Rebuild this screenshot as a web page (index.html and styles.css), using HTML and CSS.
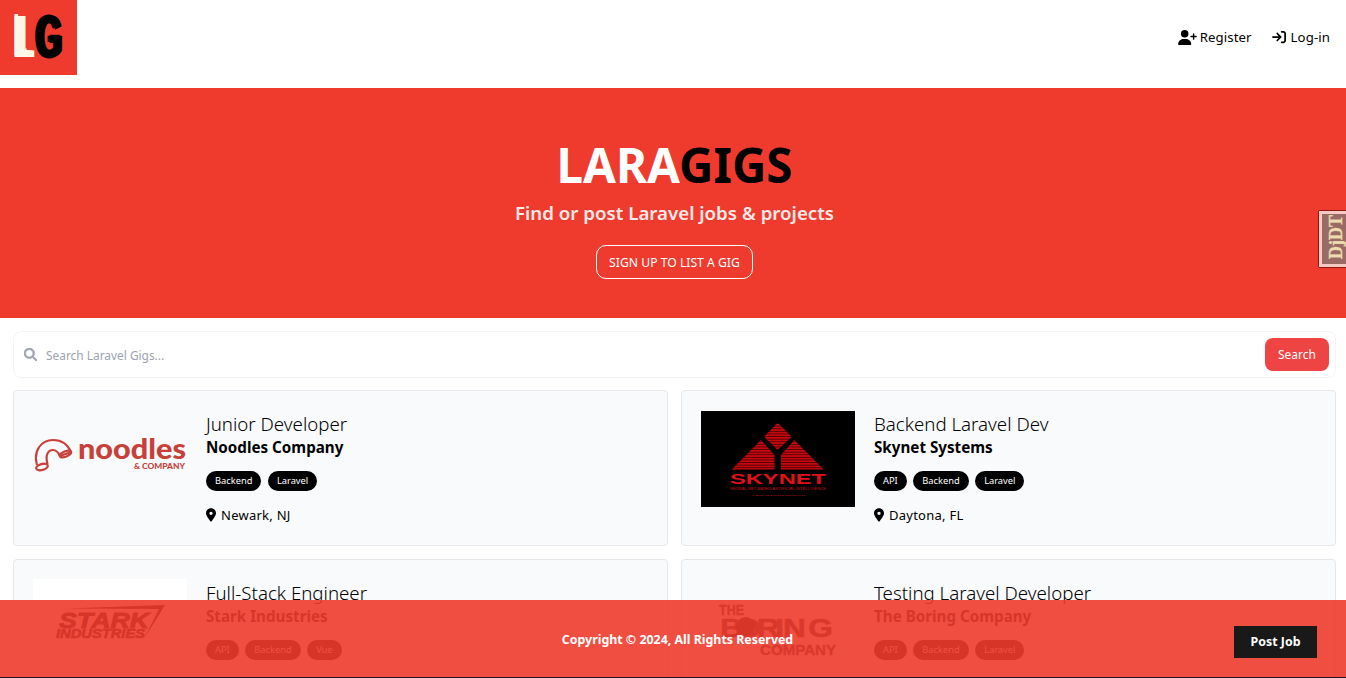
FILE: index.html
```html
<!DOCTYPE html>
<html lang="en">
<head>
<meta charset="utf-8">
<title>LaraGigs</title>
<link rel="stylesheet" href="styles.css">
</head>
<body>
<nav class="nav">
  <a class="brand" href="#"><span class="brand-l">L</span><span class="brand-g">G</span></a>
  <ul class="nav-links">
    <li><a href="#"><svg class="nav-icon-wide" viewBox="0 0 640 512"><path d="M96 128a128 128 0 1 1 256 0A128 128 0 1 1 96 128zM0 482.3C0 383.8 79.8 304 178.3 304h91.4C368.2 304 448 383.8 448 482.3c0 16.4-13.3 29.7-29.7 29.7H29.7C13.3 512 0 498.7 0 482.3zM504 312V248H440c-13.3 0-24-10.7-24-24s10.7-24 24-24h64V136c0-13.3 10.7-24 24-24s24 10.7 24 24v64h64c13.3 0 24 10.7 24 24s-10.7 24-24 24H552v64c0 13.3-10.7 24-24 24s-24-10.7-24-24z"/></svg>Register</a></li>
    <li><a href="#"><svg class="nav-icon" viewBox="0 0 512 512"><path d="M352 96l64 0c17.7 0 32 14.3 32 32l0 256c0 17.7-14.3 32-32 32l-64 0c-17.7 0-32 14.3-32 32s14.3 32 32 32l64 0c53 0 96-43 96-96l0-256c0-53-43-96-96-96l-64 0c-17.7 0-32 14.3-32 32s14.3 32 32 32zm-9.4 182.6c12.5-12.5 12.5-32.8 0-45.3l-128-128c-12.5-12.5-32.8-12.5-45.3 0s-12.5 32.8 0 45.3L242.7 224 32 224c-17.7 0-32 14.3-32 32s14.3 32 32 32l210.7 0-73.4 73.4c-12.5 12.5-12.5 32.8 0 45.3s32.8 12.5 45.3 0l128-128z"/></svg>Log-in</a></li>
  </ul>
</nav>

<section class="hero">
  <h1 class="hero-title">LARA<span class="hero-dark">GIGS</span></h1>
  <p class="hero-sub">Find or post Laravel jobs &amp; projects</p>
  <a class="hero-btn" href="#">SIGN UP TO LIST A GIG</a>
</section>

<a class="djdt" href="#">DjDT</a>

<main class="content">
  <form class="search">
    <svg class="search-icon" viewBox="0 0 512 512"><path d="M416 208c0 45.9-14.9 88.3-40 122.7L502.6 457.4c12.5 12.5 12.5 32.8 0 45.3s-32.8 12.5-45.3 0L330.7 376c-34.4 25.2-76.8 40-122.7 40C93.1 416 0 322.9 0 208S93.1 0 208 0S416 93.1 416 208zM208 352a144 144 0 1 0 0-288 144 144 0 1 0 0 288z"/></svg>
    <input class="search-input" type="text" placeholder="Search Laravel Gigs...">
    <button class="search-btn" type="button">Search</button>
  </form>

  <div class="grid">
    <article class="card">
      <svg class="logo" viewBox="0 0 154 96">
        <g fill="none" stroke="#c8403a" stroke-width="2.2" stroke-linejoin="round">
          <path d="M4 54C0 40 8 29 20 29C29 29 35 34 38 41L27 45C25 41 23 39 20 39C15 39 12 44 14.500 53"/>
          <ellipse cx="9" cy="56" rx="6" ry="3" transform="rotate(-15 9 56)"/>
          <ellipse cx="32.500" cy="43" rx="6" ry="2.600" transform="rotate(-22 32.500 43)"/>
        </g>
        <text class="noodles-word" x="45" y="48" textLength="108" lengthAdjust="spacingAndGlyphs">noodles</text>
        <text class="noodles-sub" x="101" y="58" textLength="51" lengthAdjust="spacingAndGlyphs">&amp; COMPANY</text>
      </svg>
      <div class="card-body">
        <h3 class="job-title">Junior Developer</h3>
        <div class="company">Noodles Company</div>
        <ul class="tags"><li class="tag">Backend</li><li class="tag">Laravel</li></ul>
        <div class="location"><svg class="pin" viewBox="0 0 384 512"><path d="M215.7 499.2C267 435 384 279.4 384 192C384 86 298 0 192 0S0 86 0 192c0 87.4 117 243 168.3 307.2c12.3 15.3 35.1 15.3 47.4 0zM192 128a64 64 0 1 1 0 128 64 64 0 1 1 0-128z"/></svg>Newark, NJ</div>
      </div>
    </article>

    <article class="card">
      <svg class="logo" viewBox="0 0 154 96">
        <defs>
          <pattern id="lines" width="3" height="2.6" patternUnits="userSpaceOnUse">
            <rect width="3" height="1.7" fill="#cc080e"/>
            <rect y="1.7" width="3" height="0.9" fill="#4a0205"/>
          </pattern>
        </defs>
        <rect width="154" height="96" fill="#000"/>
        <path fill="url(#lines)" d="M76.7 11.700L90.700 25.700L76.700 39L63 25.700ZM60 29L73.500 44V58.500H30.700ZM93.400 29L79.900 44V58.500H122.700Z"/>
        <text class="sky-word" x="29" y="72.500" textLength="96" lengthAdjust="spacingAndGlyphs">SKYNET</text>
        <text class="sky-sub" x="29" y="79" textLength="96" lengthAdjust="spacingAndGlyphs">NEURAL NET-BASED ARTIFICIAL INTELLIGENCE</text>
        <text class="sky-tiny" x="50.500" y="84.500" textLength="54" lengthAdjust="spacingAndGlyphs">CYBERDYNE SYSTEMS CORPORATION</text>
      </svg>
      <div class="card-body">
        <h3 class="job-title">Backend Laravel Dev</h3>
        <div class="company">Skynet Systems</div>
        <ul class="tags"><li class="tag">API</li><li class="tag">Backend</li><li class="tag">Laravel</li></ul>
        <div class="location"><svg class="pin" viewBox="0 0 384 512"><path d="M215.7 499.2C267 435 384 279.4 384 192C384 86 298 0 192 0S0 86 0 192c0 87.4 117 243 168.3 307.2c12.3 15.3 35.1 15.3 47.4 0zM192 128a64 64 0 1 1 0 128 64 64 0 1 1 0-128z"/></svg>Daytona, FL</div>
      </div>
    </article>

    <article class="card">
      <svg class="logo" viewBox="0 0 154 96">
        <rect width="154" height="96" fill="#fff"/>
        <text class="stark-word" x="26" y="49" textLength="90" lengthAdjust="spacingAndGlyphs">STARK</text>
        <text class="stark-sub" x="23" y="59" textLength="89" lengthAdjust="spacingAndGlyphs">INDUSTRIES</text>
        <path d="M33 29.500L132 26L111 60L126 30Z"/>
      </svg>
      <div class="card-body">
        <h3 class="job-title">Full-Stack Engineer</h3>
        <div class="company">Stark Industries</div>
        <ul class="tags"><li class="tag">API</li><li class="tag">Backend</li><li class="tag">Vue</li></ul>
      </div>
    </article>

    <article class="card">
      <svg class="logo" viewBox="0 0 154 96">
        <text class="boring-small" x="18" y="36" textLength="25" lengthAdjust="spacingAndGlyphs">THE</text>
        <text class="boring-big" transform="scale(1.27 1)" x="15 28 44 58.500 64.500 84.500" y="58">BORING</text>
        <circle cx="44.700" cy="47.500" r="9.500"/>
        <text class="boring-small" x="59" y="76" textLength="76" lengthAdjust="spacingAndGlyphs">COMPANY</text>
      </svg>
      <div class="card-body">
        <h3 class="job-title">Testing Laravel Developer</h3>
        <div class="company">The Boring Company</div>
        <ul class="tags"><li class="tag">API</li><li class="tag">Backend</li><li class="tag">Laravel</li></ul>
      </div>
    </article>
  </div>
</main>

<footer class="footer">
  <p class="copyright">Copyright &copy; 2024, All Rights Reserved</p>
  <a class="post-job" href="#">Post Job</a>
</footer>
</body>
</html>
```

FILE: styles.css
```css
* { box-sizing: border-box; }
html, body { margin: 0; padding: 0; }
body {
  font-family: "Noto Sans", "Open Sans", sans-serif;
  color: #000;
  background: #fff;
  height: 678px;
  overflow: hidden;
}
a { color: inherit; text-decoration: none; }
ul { list-style: none; margin: 0; padding: 0; }
h1, h3, p { margin: 0; }

.nav {
  display: flex;
  justify-content: space-between;
  align-items: flex-start;
  height: 88px;
}
.brand {
  display: flex;
  width: 77px;
  height: 75px;
  padding-left: 13px;
  background: #ef3b2d;
  font-family: "Liberation Sans", sans-serif;
  font-weight: 700;
  font-size: 59px;
  line-height: 75px;
}
.brand-l, .brand-g { display: block; transform-origin: left center; }
.brand-l {
  width: 23px;
  color: #fff8e8;
  transform: scaleX(.4);
  text-shadow: 5px 0 #fff8e8, 10px 0 #fff8e8, 15px 0 #fff8e8, 19px 0 #fff8e8, 0 -2px #fff8e8;
}
.brand-g {
  width: 31px;
  color: #000;
  transform: scaleX(.56);
  text-shadow: -4px 0 #000, 4px 0 #000, 0 -1px #000, 0 1px #000;
}
.nav-links {
  display: flex;
  gap: 20px;
  padding: 27px 16px 0 0;
  font-size: 13.2px;
  line-height: 20px;
  letter-spacing: .1px;
}
.nav-links a { display: flex; align-items: center; }
.nav-icon-wide { width: 19px; height: 15px; margin-right: 3px; }
.nav-icon { width: 14px; height: 14px; margin-right: 5px; }

.hero {
  display: flex;
  flex-direction: column;
  align-items: center;
  height: 230px;
  padding: 47px 0 0 3px;
  background: #ef3b2d;
  color: #fff;
}
.hero-title { font-size: 47.5px; line-height: 60px; font-weight: 700; }
.hero-dark { color: #000; }
.hero-sub { margin-top: 4px; font-size: 18.7px; line-height: 28px; font-weight: 600; color: #fbe9e7; }
.hero-btn {
  margin-top: 18px;
  width: 157px;
  height: 34px;
  line-height: 33px;
  text-align: center;
  border: 1px solid #fff;
  border-radius: 10px;
  font-size: 12.2px;
}

.djdt {
  position: absolute;
  top: 211px;
  right: 0;
  width: 27px;
  height: 56px;
  display: flex;
  align-items: center;
  justify-content: center;
  padding: 3px 5px 0 0;
  writing-mode: vertical-rl;
  transform: rotate(180deg);
  background: #9a6a66;
  border: 3px solid #f7c9c4;
  border-left: 0;
  box-shadow: 1px 0 0 #8c1a12, 0 1px 0 #8c1a12, 0 -1px 0 #8c1a12;
  color: #ecdcb0;
  font-family: "Liberation Serif", serif;
  font-weight: 700;
  font-size: 18px;
  -webkit-text-stroke: .4px #ecdcb0;
}

.content { padding: 13px 10px 0 13px; }
.search {
  display: flex;
  align-items: center;
  height: 47px;
  padding: 0 6px 0 10px;
  border: 1px solid #f3f4f6;
  border-radius: 8px;
}
.search-icon { width: 13px; height: 13px; fill: #9ca3af; stroke: #9ca3af; stroke-width: 24px; flex: none; }
.search-input {
  flex: 1;
  min-width: 0;
  margin-left: 9px;
  padding: 0;
  border: 0;
  outline: 0;
  font: inherit;
  font-size: 11.9px;
}
.search-input::placeholder { color: #9ca3af; opacity: 1; }
.search-btn {
  width: 64px;
  height: 33px;
  border: 0;
  border-radius: 8px;
  background: #ef4444;
  color: #fff;
  font: inherit;
  font-size: 12px;
}

.grid {
  display: grid;
  grid-template-columns: 655px 655px;
  gap: 13px;
  margin-top: 12px;
}
.card {
  display: flex;
  gap: 19px;
  height: 155.5px;
  padding: 19.5px 19px;
  background: #f9fafb;
  border: 1px solid #e5e7eb;
  border-radius: 4px;
}
.logo { width: 154px; height: 96px; flex: none; }
.job-title { font-size: 18.7px; line-height: 28px; font-weight: 300; margin-top: -.5px; }
.company { font-size: 15.2px; line-height: 20px; font-weight: 700; margin-top: -1px; }
.tags { display: flex; gap: 6.5px; margin-top: 14px; }
.tag {
  height: 20px;
  padding: 0 9px;
  border-radius: 10px;
  background: #000;
  color: #fff;
  font-size: 9.3px;
  line-height: 20px;
}
.location {
  display: flex;
  align-items: center;
  margin-top: 14px;
  font-size: 13px;
  line-height: 20px;
  letter-spacing: .25px;
}
.pin { width: 10px; height: 14px; margin-right: 5px; }

.noodles-word { font-family: Lato, sans-serif; font-weight: 900; font-size: 28px; fill: #c8403a; }
.noodles-sub { font-family: Lato, sans-serif; font-weight: 900; font-size: 7px; fill: #c8403a; }
.sky-word { font-family: "Liberation Sans", sans-serif; font-weight: 700; font-size: 14.5px; fill: #e0101a; }
.sky-sub { font-family: "Liberation Sans", sans-serif; font-size: 3.2px; fill: #c01218; }
.sky-tiny { font-family: "Liberation Sans", sans-serif; font-size: 2.4px; fill: #c01218; }
.stark-word { font-family: "Liberation Sans", sans-serif; font-style: italic; font-weight: 700; font-size: 22px; stroke: #000; stroke-width: .9px; }
.stark-sub { font-family: "Liberation Sans", sans-serif; font-style: italic; font-weight: 700; font-size: 12px; stroke: #000; stroke-width: .6px; }
.boring-small { font-family: "Liberation Sans", sans-serif; font-weight: 700; font-size: 14.5px; fill: #222; stroke: #222; stroke-width: .4px; }
.boring-big { font-family: "Liberation Sans", sans-serif; font-weight: 700; font-size: 25px; fill: #222; stroke: #222; stroke-width: .5px; }

.footer {
  position: fixed;
  left: 0;
  right: 0;
  bottom: 0;
  height: 78px;
  display: flex;
  align-items: center;
  justify-content: center;
  background: #ef3b2d;
  border-bottom: 1px solid #000;
  color: #fff;
  opacity: .9;
  font-weight: 700;
  font-size: 12.4px;
}
.copyright { margin: 1px 0 0 9px; }
.post-job {
  position: absolute;
  top: 26px;
  right: 29px;
  width: 83px;
  height: 32px;
  line-height: 32px;
  text-align: center;
  background: #000;
  color: #fff;
}
```
